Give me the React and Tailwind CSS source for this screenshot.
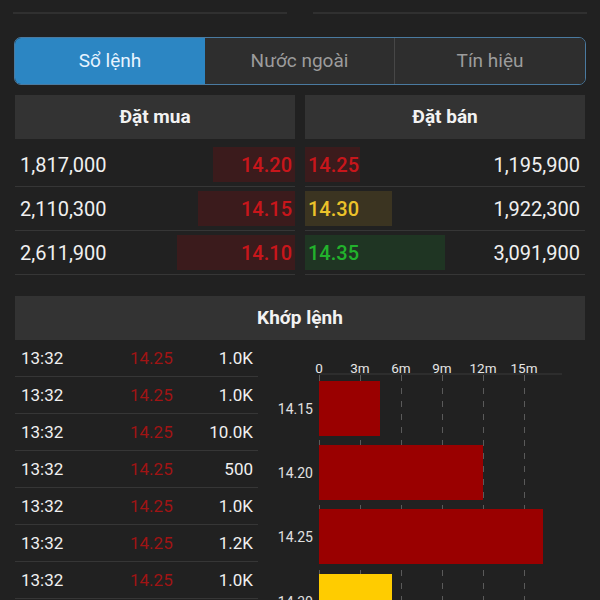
import React from "react";

const buys = [
  { q: "1,817,000", p: "14.20", w: 82 },
  { q: "2,110,300", p: "14.15", w: 97 },
  { q: "2,611,900", p: "14.10", w: 118 },
];
const sells = [
  { q: "1,195,900", p: "14.25", w: 55, bg: "bg-[#3b1b1c]", c: "text-[#c8161b]" },
  { q: "1,922,300", p: "14.30", w: 87, bg: "bg-[#3b3421]", c: "text-[#ecc22a]" },
  { q: "3,091,900", p: "14.35", w: 140, bg: "bg-[#1f3523]", c: "text-[#22b22c]" },
];
const trades = ["1.0K", "1.0K", "10.0K", "500", "1.0K", "1.2K", "1.0K"];

function Chart() {
  const xs = [61, 102, 143, 184, 225, 266];
  const labels = ["0", "3m", "6m", "9m", "12m", "15m"];
  const bars = [
    { y: 41, w: 61, c: "#9a0000", l: "14.15" },
    { y: 105, w: 164, c: "#9a0000", l: "14.20" },
    { y: 169, w: 224, c: "#9a0000", l: "14.25" },
    { y: 234, w: 73, c: "#ffcc00", l: "14.30" },
  ];
  return (
    <svg width="327" height="261" className="block" style={{ fontFamily: "Roboto, sans-serif" }}>
      <line x1="61" y1="34" x2="304" y2="34" stroke="#3a3a3a" strokeWidth="1" />
      {xs.map((x, i) => (
        <g key={i}>
          <text x={x} y="33" textAnchor="middle" fontSize="13.5" fill="#e6e6e6">{labels[i]}</text>
          <line x1={x + 0.5} y1="35" x2={x + 0.5} y2="261" stroke="#5a5a5a" strokeWidth="1" strokeDasharray="6 7" />
        </g>
      ))}
      {bars.map((b, i) => (
        <g key={i}>
          <rect x="61" y={b.y} width={b.w} height="55" fill={b.c} />
          <text x="55" y={b.y + 33} textAnchor="end" fontSize="14" fill="#e0e0e0">{b.l}</text>
        </g>
      ))}
    </svg>
  );
}

export default function App() {
  return (
    <div className="w-[600px] h-[600px] overflow-hidden bg-[#212121] text-white" style={{ fontFamily: "Roboto, 'Noto Sans', sans-serif" }}>
      {/* top cut strip */}
      <div className="flex gap-[26px] px-[13px] h-[14px]">
        <div className="flex-1 border-b-2 border-[#303030]" />
        <div className="flex-1 border-b-2 border-[#303030]" />
      </div>

      {/* tabs */}
      <div className="mx-[14px] mt-[23px] h-[48px] flex rounded-[7px] border border-[#4a7aa0] overflow-hidden text-[19px]">
        <div className="w-[190px] bg-[#2c86c3] flex items-center justify-center text-[#e8f4ff]">Sổ lệnh</div>
        <div className="w-[190px] bg-[#2e2e2e] flex items-center justify-center text-[#9c9c9c] border-r border-[#474747]">Nước ngoài</div>
        <div className="flex-1 bg-[#2e2e2e] flex items-center justify-center text-[#9c9c9c]">Tín hiệu</div>
      </div>

      {/* order book */}
      <div className="mx-[15px] mt-[10px] flex gap-[10px]">
        <div className="flex-1">
          <div className="h-[44px] bg-[#333333] flex items-center justify-center text-[19px] font-bold text-[#f2f2f2]">Đặt mua</div>
          <div className="mt-[4px]">
            {buys.map((r, i) => (
              <div key={i} className="h-[44px] border-b border-[#363636] flex items-center justify-between">
                <span className="pl-[5px] text-[20px] text-[#f0f0f0]">{r.q}</span>
                <div className="h-[35px] bg-[#3b1b1c] flex items-center justify-end pr-[3px] text-[20px] font-medium text-[#c8161b]" style={{ width: r.w }}>
                  {r.p}
                </div>
              </div>
            ))}
          </div>
        </div>
        <div className="flex-1">
          <div className="h-[44px] bg-[#333333] flex items-center justify-center text-[19px] font-bold text-[#f2f2f2]">Đặt bán</div>
          <div className="mt-[4px]">
            {sells.map((r, i) => (
              <div key={i} className="h-[44px] border-b border-[#363636] flex items-center justify-between">
                <div className={`h-[35px] ${r.bg} flex items-center pl-[3px] text-[20px] font-medium ${r.c}`} style={{ width: r.w }}>
                  {r.p}
                </div>
                <span className="pr-[5px] text-[20px] text-[#f0f0f0]">{r.q}</span>
              </div>
            ))}
          </div>
        </div>
      </div>

      {/* matched orders */}
      <div className="mx-[15px] mt-[21px]">
        <div className="h-[44px] bg-[#333333] flex items-center justify-center text-[19px] font-bold text-[#f2f2f2]">Khớp lệnh</div>
        <div className="flex">
          <div className="w-[243px]">
            {trades.map((v, i) => (
              <div key={i} className="h-[37px] border-b border-[#363636] flex items-center pt-[2px] text-[17px]">
                <span className="pl-[6px] w-[115px] text-[#f0f0f0]">13:32</span>
                <span className="w-[60px] text-[#a01414]">14.25</span>
                <span className="flex-1 text-right pr-[5px] text-[#f0f0f0]">{v}</span>
              </div>
            ))}
          </div>
          <Chart />
        </div>
      </div>
    </div>
  );
}
